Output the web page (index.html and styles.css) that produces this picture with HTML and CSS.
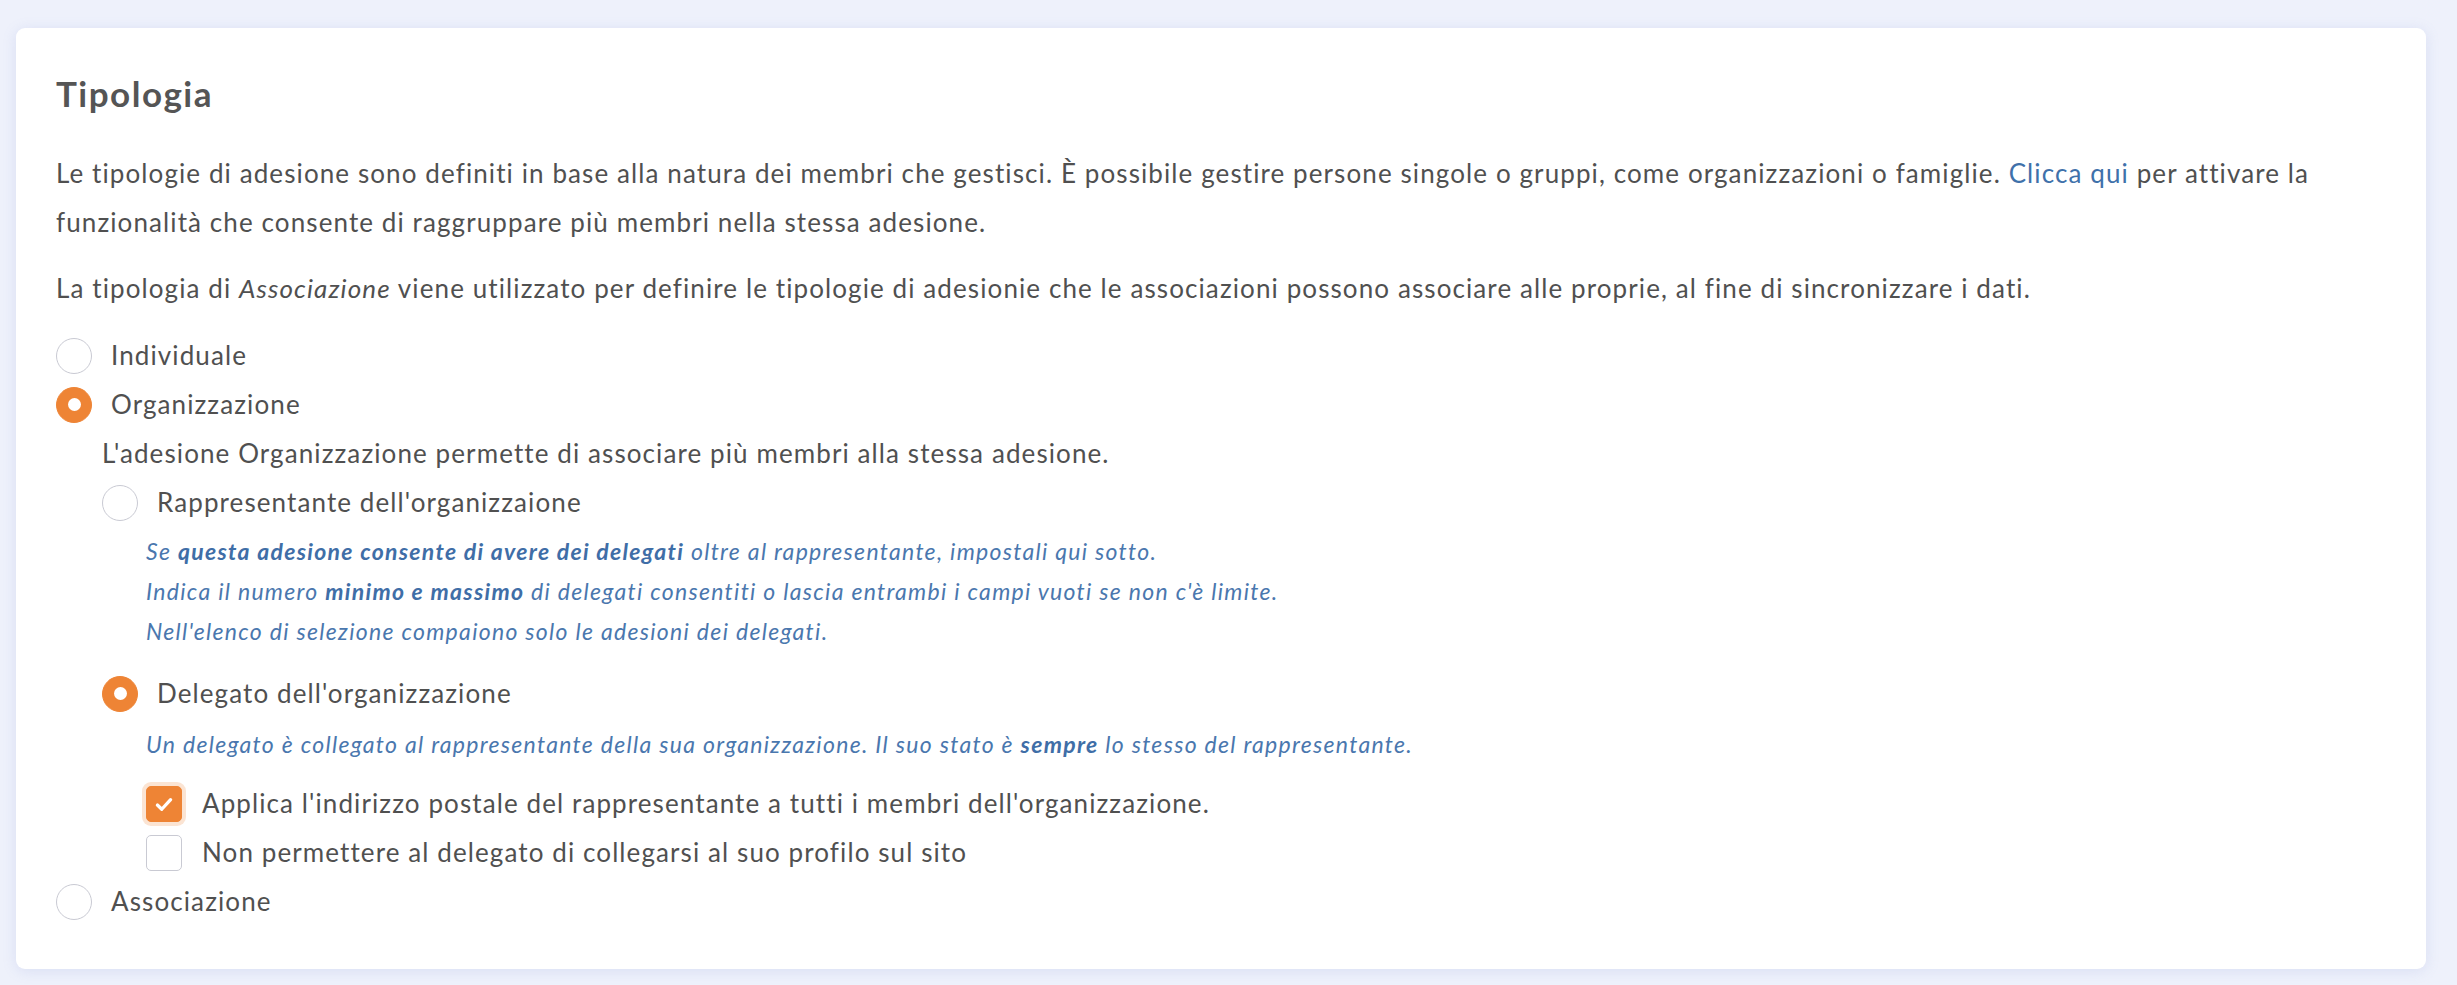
FILE: index.html
```html
<!DOCTYPE html>
<html lang="it">
<head>
    <meta charset="UTF-8">
    <meta name="viewport" content="width=device-width, initial-scale=1.0">
    <title>Tipologia</title>
    <link rel="stylesheet" href="styles.css">
</head>
<body>
    <div class="card">
        <h2 class="card-title">Tipologia</h2>
        <p class="intro">Le tipologie di adesione sono definiti in base alla natura dei membri che gestisci. È possibile gestire persone singole o gruppi, come organizzazioni o famiglie. <a href="#">Clicca qui</a> per attivare la funzionalità che consente di raggruppare più membri nella stessa adesione.</p>
        <p class="intro last">La tipologia di <em>Associazione</em> viene utilizzato per definire le tipologie di adesionie che le associazioni possono associare alle proprie, al fine di sincronizzare i dati.</p>

        <div class="option">
            <span class="radio"></span>
            <label>Individuale</label>
        </div>
        <div class="option">
            <span class="radio checked"></span>
            <label>Organizzazione</label>
        </div>

        <div class="sub">
            <p class="sub-text">L'adesione Organizzazione permette di associare più membri alla stessa adesione.</p>
            <div class="option">
                <span class="radio"></span>
                <label>Rappresentante dell'organizzaione</label>
            </div>
            <div class="hint">
                <div>Se <strong>questa adesione consente di avere dei delegati</strong> oltre al rappresentante, impostali qui sotto.</div>
                <div>Indica il numero <strong>minimo e massimo</strong> di delegati consentiti o lascia entrambi i campi vuoti se non c'è limite.</div>
                <div>Nell'elenco di selezione compaiono solo le adesioni dei delegati.</div>
            </div>
            <div class="option">
                <span class="radio checked"></span>
                <label>Delegato dell'organizzazione</label>
            </div>
            <div class="hint single">
                <div>Un delegato è collegato al rappresentante della sua organizzazione. Il suo stato è <strong>sempre</strong> lo stesso del rappresentante.</div>
            </div>
            <div class="checks">
                <div class="option">
                    <span class="checkbox checked">
                        <svg viewBox="0 0 16 16" width="24" height="24"><path d="M3.6 8.7l2.9 2.8 5.9-6.4" fill="none" stroke="#fff" stroke-width="2.2" stroke-linecap="round" stroke-linejoin="round"/></svg>
                    </span>
                    <label>Applica l'indirizzo postale del rappresentante a tutti i membri dell'organizzazione.</label>
                </div>
                <div class="option">
                    <span class="checkbox"></span>
                    <label>Non permettere al delegato di collegarsi al suo profilo sul sito</label>
                </div>
            </div>
        </div>

        <div class="option">
            <span class="radio"></span>
            <label>Associazione</label>
        </div>
    </div>
</body>
</html>
```

FILE: styles.css
```css
body {
    margin: 0;
    padding: 28px 31px 18px 16px;
    background-color: #eef1fb;
    font-family: Lato, "Noto Sans", sans-serif;
    font-size: 26px;
    line-height: 49px;
    letter-spacing: 1.1px;
    color: #505050;
}
.card {
    background-color: #fff;
    border-radius: 9px;
    box-shadow: 0 2px 14px rgba(120, 140, 210, 0.18);
    padding: 44px 40px 43px 40px;
}
.card-title {
    margin: 0 0 35px 0;
    font-size: 35px;
    line-height: 42px;
    font-weight: 700;
    letter-spacing: 1.5px;
    color: #555;
}
.intro {
    margin: 0 0 17px 0;
}
.intro.last {
    margin-bottom: 18px;
}
.intro a {
    color: #3f71aa;
    text-decoration: none;
}
.option {
    display: flex;
    align-items: center;
    height: 49px;
}
.option label {
    white-space: nowrap;
}
.radio {
    width: 36px;
    height: 36px;
    box-sizing: border-box;
    border: 1.5px solid #c9cad3;
    border-radius: 50%;
    margin-right: 19px;
    flex-shrink: 0;
    position: relative;
}
.radio.checked {
    background-color: #ee8435;
    border-color: #ee8435;
}
.radio.checked::after {
    content: "";
    position: absolute;
    left: 50%;
    top: 50%;
    width: 13px;
    height: 13px;
    margin: -6.5px 0 0 -6.5px;
    border-radius: 50%;
    background-color: #fff;
}
.sub {
    margin-left: 46px;
}
.sub-text {
    margin: 0;
}
.hint {
    margin: 4px 0 18px 44px;
    font-size: 23px;
    line-height: 40px;
    font-style: italic;
    letter-spacing: 1.3px;
    color: #4a77ae;
}
.hint.single {
    margin-top: 6px;
    margin-bottom: 15px;
}
.hint strong {
    font-weight: 700;
    color: #3f6ea7;
}
.checks {
    margin-left: 44px;
}
.checkbox {
    width: 36px;
    height: 36px;
    box-sizing: border-box;
    border: 1.5px solid #c9cad3;
    border-radius: 5px;
    margin-right: 20px;
    flex-shrink: 0;
    display: flex;
    align-items: center;
    justify-content: center;
}
.checkbox.checked {
    background-color: #ee8435;
    border-color: #ee8435;
    box-shadow: 0 0 0 4px rgba(238, 132, 53, 0.22);
}
```
